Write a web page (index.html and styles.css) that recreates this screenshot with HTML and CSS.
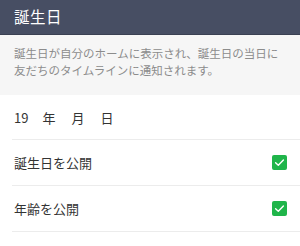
FILE: index.html
```html
<!DOCTYPE html>
<html lang="ja">
<head>
<meta charset="utf-8">
<link rel="stylesheet" href="styles.css">
</head>
<body>
<header class="bar"><h1 class="title">誕生日</h1></header>
<p class="desc">誕生日が自分のホームに表示され、誕生日の当日に<br>友だちのタイムラインに通知されます。</p>
<ul class="list">
  <li class="row"><span class="date"><span class="y">19</span><span>年</span><span>月</span><span>日</span></span></li>
  <li class="row"><span>誕生日を公開</span><span class="check"><svg viewBox="0 0 15 15" width="15" height="15"><path d="M3.6 7.8 L6.3 10.3 L11.4 4.9" fill="none" stroke="#fff" stroke-width="1.4" stroke-linecap="round" stroke-linejoin="round"/></svg></span></li>
  <li class="row"><span>年齢を公開</span><span class="check"><svg viewBox="0 0 15 15" width="15" height="15"><path d="M3.6 7.8 L6.3 10.3 L11.4 4.9" fill="none" stroke="#fff" stroke-width="1.4" stroke-linecap="round" stroke-linejoin="round"/></svg></span></li>
</ul>
</body>
</html>
```
FILE: styles.css
```css
* { box-sizing: border-box; }
html, body { margin: 0; padding: 0; background: #fff; }
body {
  font-family: "Noto Sans CJK JP", "Noto Sans", sans-serif;
  width: 300px;
  height: 246px;
  overflow: hidden;
}
.bar {
  height: 35px;
  background: #474e63;
  border-bottom: 1px solid #3a4052;
  display: flex;
  align-items: center;
  padding-left: 14px;
}
.title {
  margin: 0;
  font-size: 15.5px;
  font-weight: normal;
  color: #fff;
  letter-spacing: 0.5px;
  line-height: 1;
}
.desc {
  margin: 0;
  background: #f6f6f6;
  color: #8c8c8c;
  font-size: 11.5px;
  line-height: 17px;
  padding: 10px 0 16px 14px;
  height: 60px;
  white-space: nowrap;
}
.list {
  list-style: none;
  margin: 0;
  padding: 0 0 0 12px;
}
.row {
  height: 46px;
  border-bottom: 1px solid #ececec;
  display: flex;
  align-items: center;
  justify-content: space-between;
  padding: 0 13px 0 2px;
  font-size: 13px;
  color: #333;
}
.row:first-child { height: 45px; }
.date { display: flex; gap: 16px; }
.date .y { margin-right: -2px; }
.check {
  width: 15px;
  height: 15px;
  background: #1fb54a;
  border-radius: 2px;
  display: flex;
}
```
